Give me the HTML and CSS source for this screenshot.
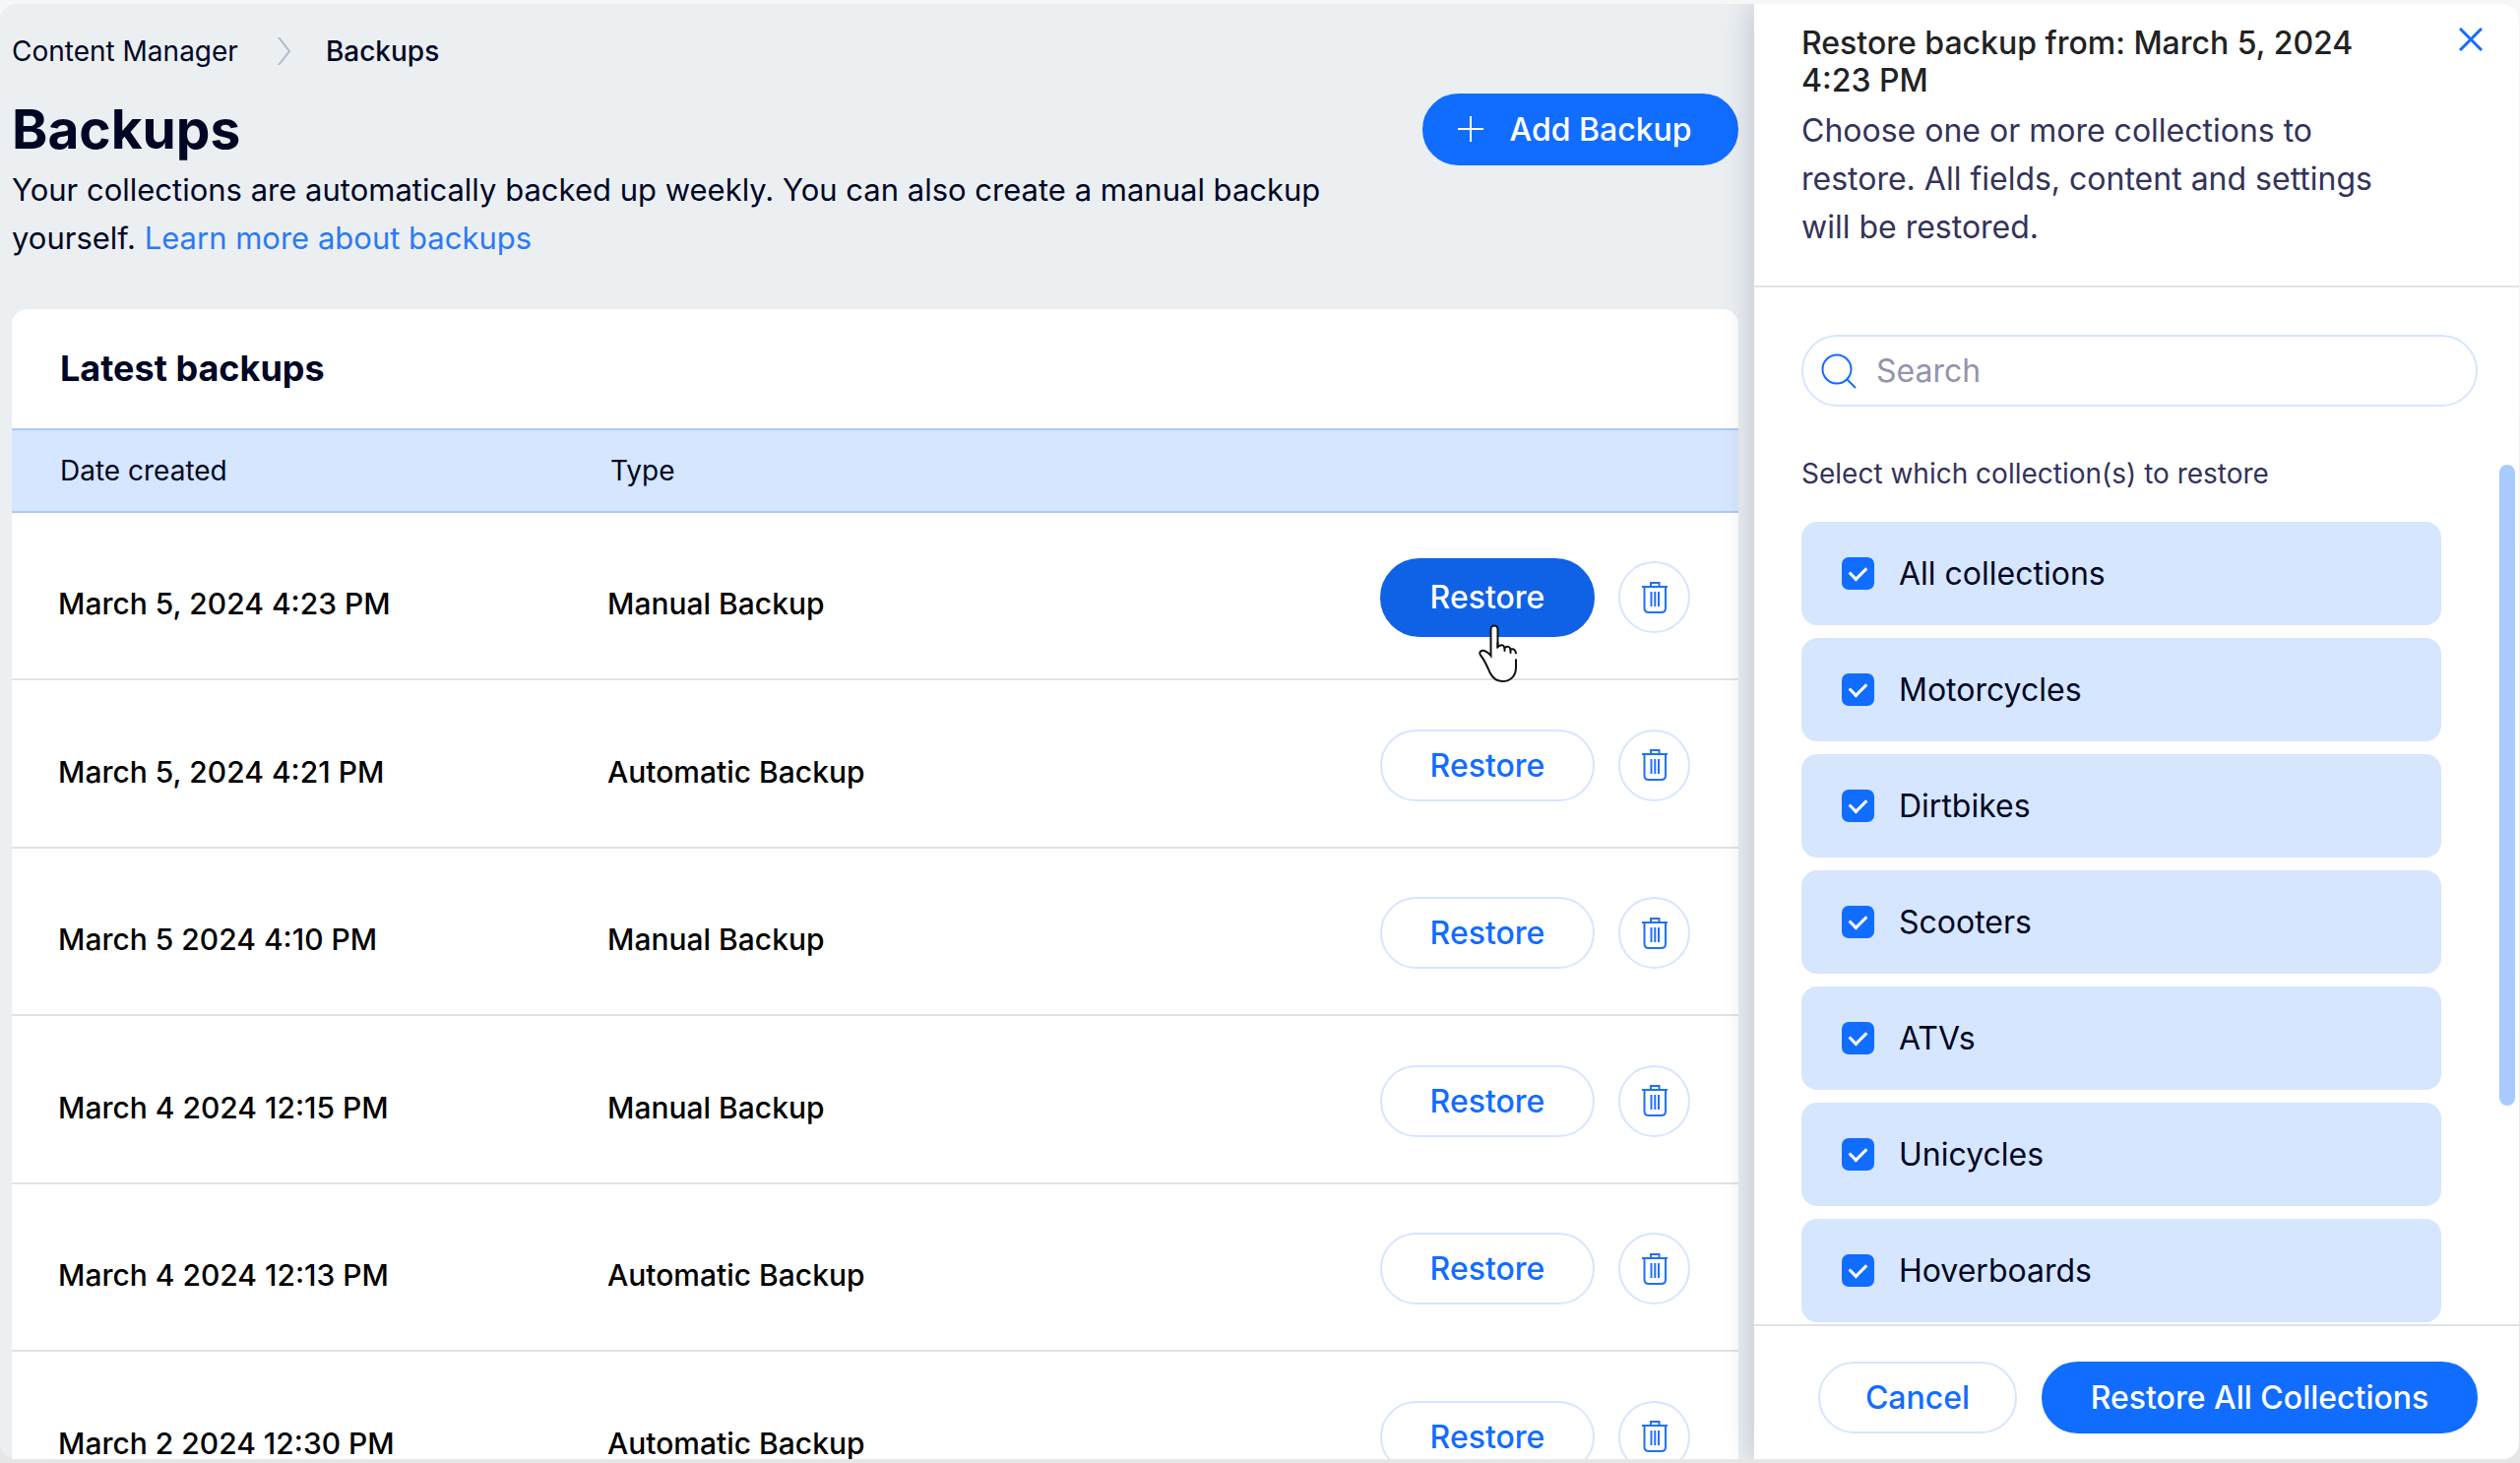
FILE: index.html
```html
<!DOCTYPE html>
<html lang="en">
<head>
    <meta charset="UTF-8">
    <meta name="viewport" content="width=device-width, initial-scale=1.0">
    <title>Backups</title>
    <link rel="stylesheet" href="styles.css">
</head>
<body>
    <!-- Shared icons -->
    <svg class="sprite" aria-hidden="true">
        <symbol id="trash" viewBox="0 0 26 32">
            <path d="M0 5H26M9 5V1H17.500V5M2.500 5V26.500Q2.500 31 7 31H19.500Q24 31 24 26.500V5M9.500 10V25M13.300 10V25M17 10V25"/>
        </symbol>
    </svg>

    <div class="app">
        <main class="main">
            <nav class="breadcrumbs">
                <a href="#">Content Manager</a>
                <svg class="chevron" viewBox="0 0 14 28"><path d="M1 0L12 14L1 28"/></svg>
                <span class="current">Backups</span>
            </nav>

            <header class="page-header">
                <h1>Backups</h1>
                <button class="btn btn-primary btn-add">
                    <svg class="plus" viewBox="0 0 28 28"><path d="M14 1V27M1 14H27"/></svg>
                    Add Backup
                </button>
            </header>
            <p class="intro">Your collections are automatically backed up weekly. You can also create a manual backup yourself. <a href="#">Learn more about backups</a></p>

            <section class="card">
                <h2>Latest backups</h2>
                <table class="backups">
                    <thead>
                        <tr>
                            <th class="col-date">Date created</th>
                            <th class="col-type">Type</th>
                            <th></th>
                        </tr>
                    </thead>
                    <tbody>
                        <tr>
                            <td class="text">March 5, 2024 4:23 PM</td>
                            <td class="text">Manual Backup</td>
                            <td>
                                <div class="actions">
                                    <button class="btn btn-restore active">Restore</button>
                                    <button class="btn-delete" aria-label="Delete"><svg><use href="#trash"/></svg></button>
                                    <svg class="cursor" viewBox="0 0 39 59">
                                        <path class="hand" d="M12.500 32V5A3.500 3.500 0 0 1 19.500 5V23Q25 19 26.500 24Q31 21 32.500 25.500Q38 24 38 31V44C38 53 32 58 24.500 58C18 58 14 54 11.500 49C8 41 6 36 2 31.500C0 28 3 26 6 27Q10 28.500 12.500 32Z"/>
                                        <path class="knuckles" d="M19.500 19V23.500M26.500 24V27M32.500 25.500V29"/>
                                        <path class="gap" d="M38 31.500V34"/>
                                    </svg>
                                </div>
                            </td>
                        </tr>
                        <tr>
                            <td class="text">March 5, 2024 4:21 PM</td>
                            <td class="text">Automatic Backup</td>
                            <td>
                                <div class="actions">
                                    <button class="btn btn-restore">Restore</button>
                                    <button class="btn-delete" aria-label="Delete"><svg><use href="#trash"/></svg></button>
                                </div>
                            </td>
                        </tr>
                        <tr>
                            <td class="text">March 5 2024 4:10 PM</td>
                            <td class="text">Manual Backup</td>
                            <td>
                                <div class="actions">
                                    <button class="btn btn-restore">Restore</button>
                                    <button class="btn-delete" aria-label="Delete"><svg><use href="#trash"/></svg></button>
                                </div>
                            </td>
                        </tr>
                        <tr>
                            <td class="text">March 4 2024 12:15 PM</td>
                            <td class="text">Manual Backup</td>
                            <td>
                                <div class="actions">
                                    <button class="btn btn-restore">Restore</button>
                                    <button class="btn-delete" aria-label="Delete"><svg><use href="#trash"/></svg></button>
                                </div>
                            </td>
                        </tr>
                        <tr>
                            <td class="text">March 4 2024 12:13 PM</td>
                            <td class="text">Automatic Backup</td>
                            <td>
                                <div class="actions">
                                    <button class="btn btn-restore">Restore</button>
                                    <button class="btn-delete" aria-label="Delete"><svg><use href="#trash"/></svg></button>
                                </div>
                            </td>
                        </tr>
                        <tr>
                            <td class="text">March 2 2024 12:30 PM</td>
                            <td class="text">Automatic Backup</td>
                            <td>
                                <div class="actions">
                                    <button class="btn btn-restore">Restore</button>
                                    <button class="btn-delete" aria-label="Delete"><svg><use href="#trash"/></svg></button>
                                </div>
                            </td>
                        </tr>
                    </tbody>
                </table>
            </section>
        </main>

        <!-- Restore panel -->
        <aside class="panel">
            <header class="panel-header">
                <div class="panel-text">
                    <h2>Restore backup from: March 5, 2024 4:23 PM</h2>
                    <p>Choose one or more collections to restore. All fields, content and settings will be restored.</p>
                </div>
                <button class="btn-close" aria-label="Close"><svg viewBox="0 0 24 24"><path d="M1 1L23 23M23 1L1 23"/></svg></button>
            </header>

            <div class="panel-body">
                <label class="search">
                    <svg viewBox="0 0 36 36"><circle cx="16" cy="16" r="14.500"/><path d="M26 26L35 35"/></svg>
                    <input type="text" placeholder="Search" aria-label="Search">
                </label>
                <p class="hint">Select which collection(s) to restore</p>
                <div class="collections">
                    <label class="collection"><input type="checkbox" checked> All collections</label>
                    <label class="collection"><input type="checkbox" checked> Motorcycles</label>
                    <label class="collection"><input type="checkbox" checked> Dirtbikes</label>
                    <label class="collection"><input type="checkbox" checked> Scooters</label>
                    <label class="collection"><input type="checkbox" checked> ATVs</label>
                    <label class="collection"><input type="checkbox" checked> Unicycles</label>
                    <label class="collection"><input type="checkbox" checked> Hoverboards</label>
                </div>
                <div class="scroll-thumb"></div>
            </div>

            <footer class="panel-footer">
                <button class="btn btn-cancel">Cancel</button>
                <button class="btn btn-primary btn-all">Restore All Collections</button>
            </footer>
        </aside>
    </div>
</body>
</html>
```

FILE: styles.css
```css
* {
    box-sizing: border-box;
}
body {
    font-family: Inter, "Liberation Sans", sans-serif;
    margin: 0;
    height: 100vh;
    padding: 4px 1px 4px 0;
    background: linear-gradient(#f7f7f7, #e6e6e6);
    color: #000624;
    overflow: hidden;
}
h1, h2, p {
    margin: 0;
}
a {
    color: inherit;
    text-decoration: none;
}
button, input {
    font-family: inherit;
}
svg {
    fill: none;
    stroke: currentColor;
    stroke-width: 2;
}
.sprite {
    position: absolute;
    width: 0;
    height: 0;
}
.app {
    display: flex;
    height: 100%;
    border-radius: 16px;
    background: #ebeff2;
    overflow: hidden;
}

/* Main column */
.main {
    flex: 1;
    padding: 28px 16px 0 12px;
}
.breadcrumbs {
    display: flex;
    align-items: center;
    height: 40px;
    font-size: 28px;
}
.breadcrumbs .current {
    font-weight: 500;
}
.chevron {
    width: 14px;
    height: 28px;
    margin: 0 35px 0 40px;
    color: #b3b9c9;
}
.page-header {
    display: flex;
    justify-content: space-between;
    align-items: center;
    height: 74px;
    margin-top: 22px;
}
.page-header h1 {
    font-size: 55px;
    line-height: 60px;
}
.intro {
    max-width: 1400px;
    font-size: 31px;
    line-height: 49px;
}
.intro a {
    color: #2b79f5;
}
.card {
    margin-top: 48px;
    background: #fff;
    border-radius: 16px 16px 0 0;
}
.card h2 {
    padding: 0 49px;
    font-size: 36px;
    line-height: 121px;
}

/* Buttons */
.btn {
    display: flex;
    justify-content: center;
    align-items: center;
    height: 73px;
    padding: 0;
    border: 2px solid #d6e6fe;
    border-radius: 40px;
    background: #fff;
    color: #116dff;
    font-size: 32px;
    font-weight: 500;
    cursor: pointer;
}
.btn-primary {
    border-color: #116dff;
    background: #116dff;
    color: #fff;
}
.btn-add {
    width: 321px;
    gap: 25px;
    padding-right: 12px;
}
.plus {
    width: 28px;
    height: 28px;
}
.btn-restore {
    width: 218px;
}
.btn-restore.active {
    height: 80px;
    border-color: #0f62e6;
    background: #0f62e6;
    color: #fff;
}
.btn-delete {
    display: flex;
    justify-content: center;
    align-items: center;
    width: 73px;
    height: 73px;
    padding: 0;
    border: 2px solid #d6e6fe;
    border-radius: 50%;
    background: #fff;
    color: #2370f2;
    cursor: pointer;
}
.btn-delete svg {
    width: 26px;
    height: 32px;
}

/* Backups table */
.backups {
    width: 100%;
    border-collapse: separate;
    border-spacing: 0;
    table-layout: fixed;
}
.backups th {
    height: 86px;
    padding: 0 0 0 49px;
    border: solid #a9c9fb;
    border-width: 2px 0;
    background: #d6e6fe;
    font-size: 28px;
    font-weight: 400;
    text-align: left;
}
.backups th.col-date {
    width: 558px;
}
.backups td {
    height: 170px;
    padding: 3px 49px 0 47px;
    border-bottom: 2px solid #dfe3e8;
}
.backups tr:nth-child(even) td {
    height: 171px;
}
.backups td.text {
    padding-top: 16px;
    color: #000;
    font-size: 30px;
    font-weight: 500;
}
.backups .col-type {
    padding-left: 50px;
}
.actions {
    position: relative;
    display: flex;
    justify-content: flex-end;
    align-items: center;
    gap: 24px;
}
.cursor {
    position: absolute;
    top: 67px;
    right: 176px;
    width: 39px;
    height: 59px;
    color: #111;
    stroke-linecap: round;
}
.cursor .hand {
    fill: #fff;
}
.cursor .gap {
    stroke: #fff;
    stroke-width: 3;
}

/* Restore panel */
.panel {
    display: flex;
    flex-direction: column;
    width: 777px;
    background: #fff;
    box-shadow: 0 0 30px rgba(15, 25, 60, 0.22);
}
.panel-header {
    display: flex;
    justify-content: space-between;
    align-items: flex-start;
    height: 288px;
    padding: 21px 37px 0 48px;
    border-bottom: 2px solid #dfe3e8;
}
.panel-text {
    width: 600px;
}
.panel-text h2 {
    color: #222;
    font-size: 32px;
    font-weight: 500;
    line-height: 38px;
}
.panel-text p {
    margin-top: 7px;
    color: #33335a;
    font-size: 32px;
    line-height: 49px;
}
.btn-close {
    padding: 3px 0;
    border: 0;
    background: none;
    color: #116dff;
    cursor: pointer;
}
.btn-close svg {
    display: block;
    width: 24px;
    height: 24px;
    stroke-width: 3;
}
.panel-body {
    position: relative;
    flex: 1;
    padding: 48px 42px 0 48px;
    overflow: hidden;
}
.search {
    display: flex;
    align-items: center;
    gap: 20px;
    height: 73px;
    padding: 0 20px 0 18px;
    border: 2px solid #d6e6fe;
    border-radius: 37px;
    color: #116dff;
}
.search svg {
    width: 36px;
    height: 36px;
}
.search input {
    flex: 1;
    padding: 0;
    border: 0;
    outline: none;
    background: none;
    font-size: 32px;
}
.search input::placeholder {
    color: #9494ab;
}
.hint {
    margin-top: 48px;
    color: #33335a;
    font-size: 28px;
    line-height: 40px;
}
.collections {
    display: flex;
    flex-direction: column;
    gap: 13px;
    margin: 29px 37px 0 0;
}
.collection {
    display: flex;
    align-items: center;
    gap: 25px;
    height: 105px;
    padding-left: 41px;
    border-radius: 16px;
    background: #d6e6fe;
    font-size: 32px;
}
.collection input {
    appearance: none;
    display: flex;
    justify-content: center;
    align-items: center;
    width: 33px;
    height: 33px;
    margin: 0;
    border-radius: 7px;
    background: #116dff;
}
/* Tick mark */
.collection input:checked::before {
    content: "";
    width: 14px;
    height: 8px;
    margin-bottom: 5px;
    border: solid #fff;
    border-width: 0 0 3px 3px;
    transform: rotate(-45deg);
}
.scroll-thumb {
    position: absolute;
    top: 180px;
    right: 4px;
    width: 16px;
    height: 651px;
    border-radius: 8px;
    background: #a8caff;
}
.panel-footer {
    display: flex;
    justify-content: flex-end;
    gap: 25px;
    height: 137px;
    padding: 36px 42px 0 0;
    border-top: 2px solid #dfe3e8;
}
.btn-cancel {
    width: 202px;
}
.btn-all {
    width: 443px;
}
```
